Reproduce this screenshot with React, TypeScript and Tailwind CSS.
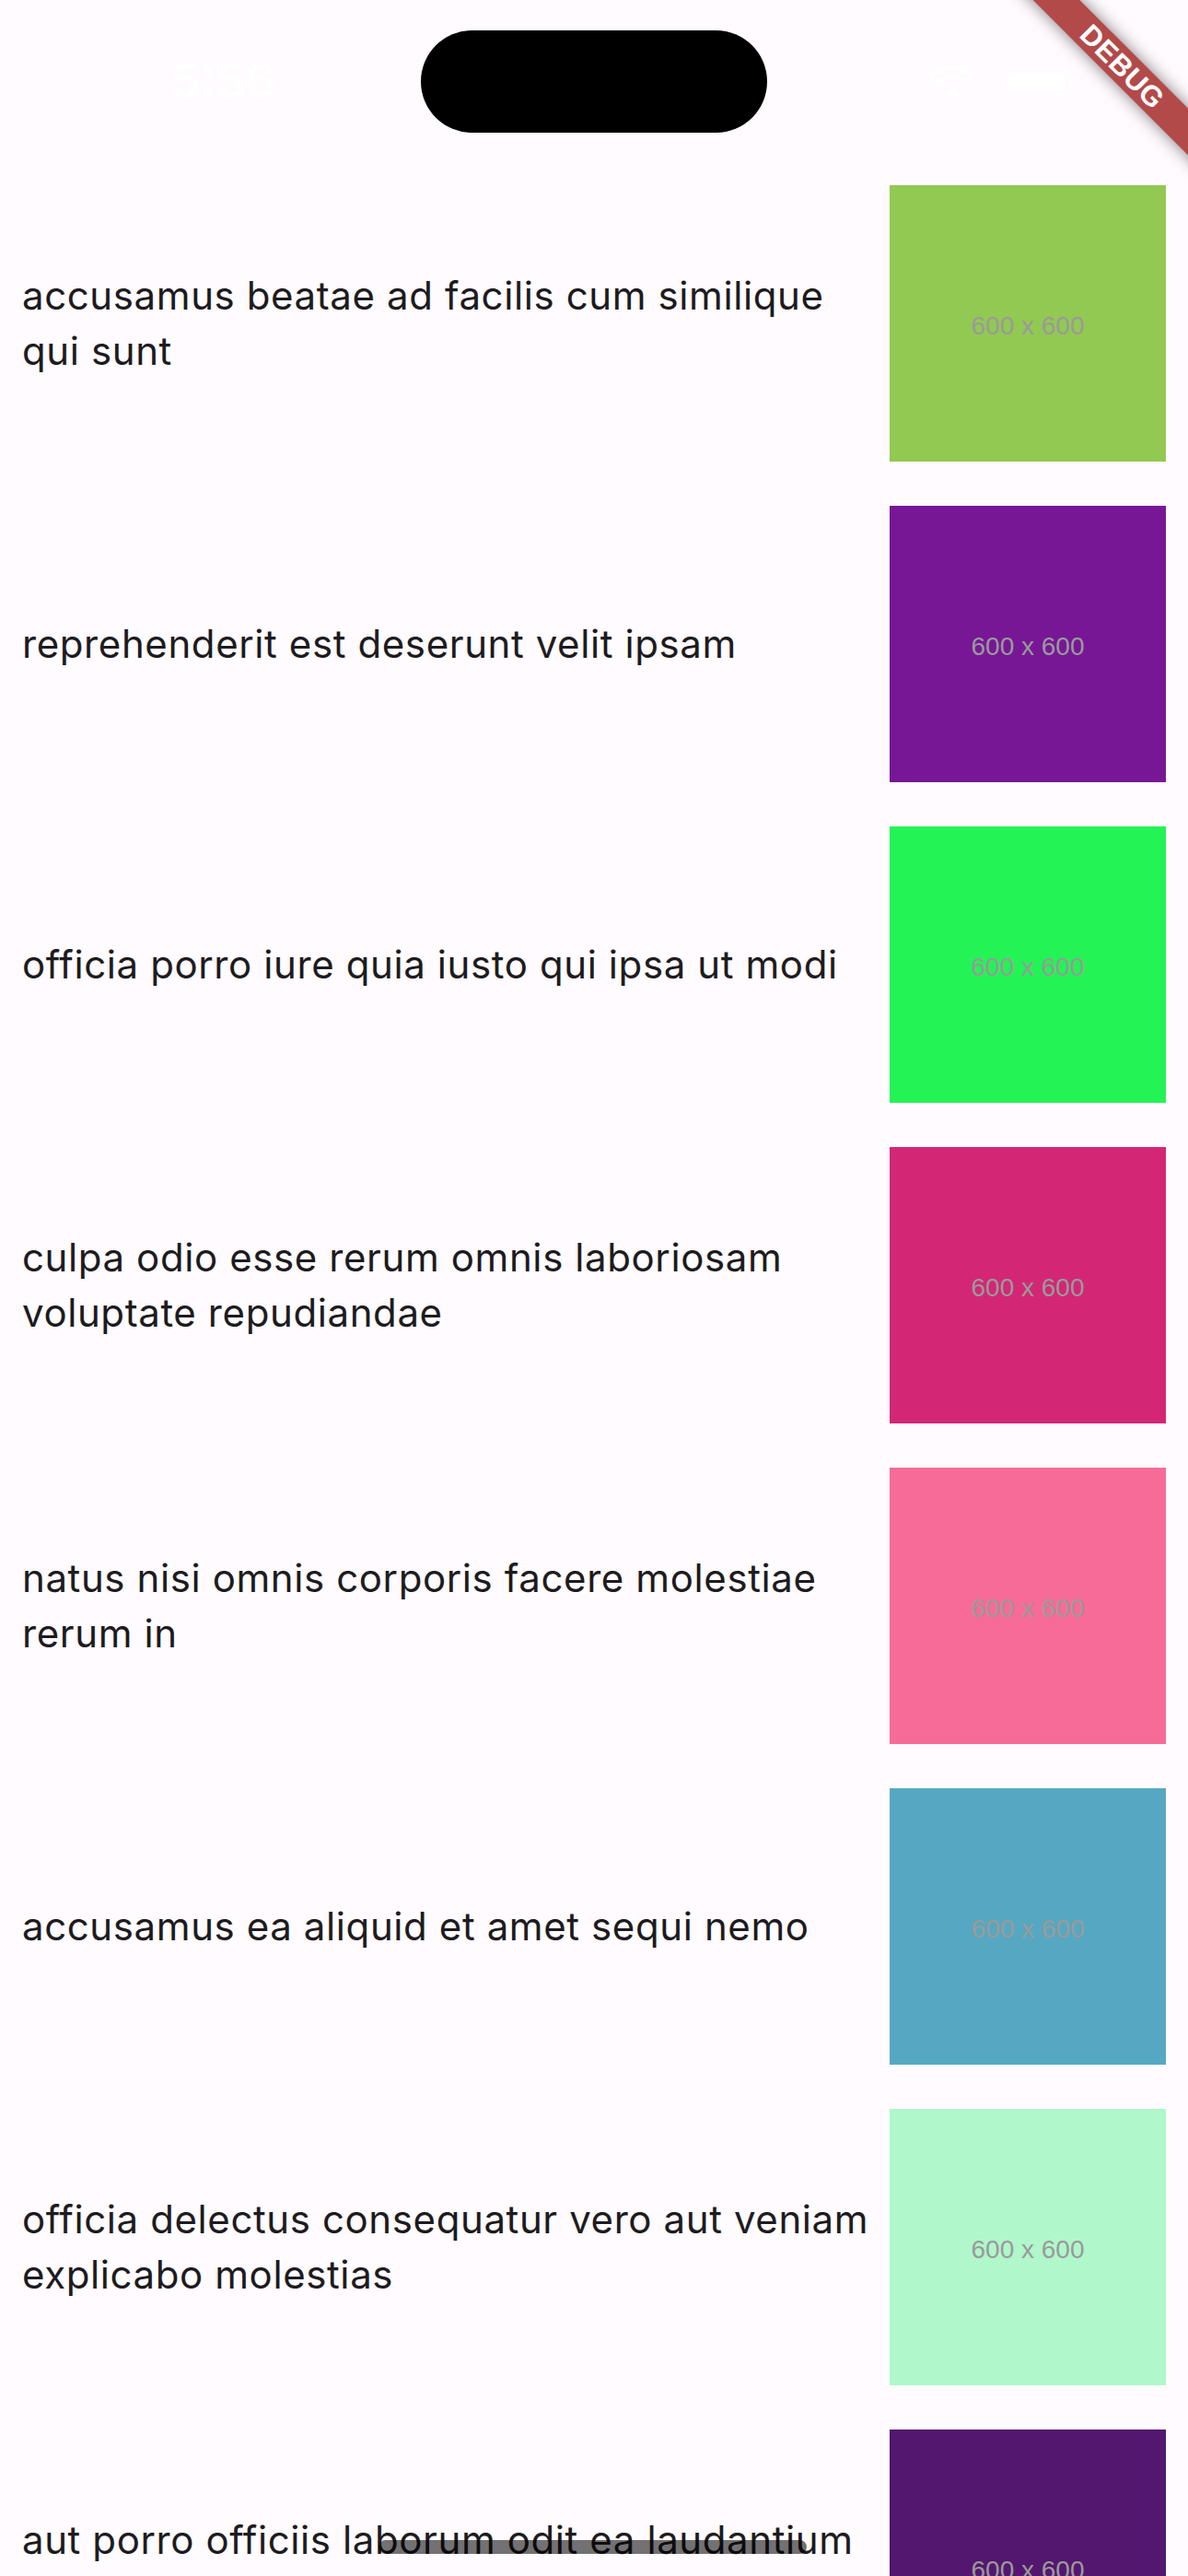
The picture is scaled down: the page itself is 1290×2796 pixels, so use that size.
const photos = [
  { title: 'accusamus beatae ad facilis cum similique qui sunt', color: 'bg-[#92c952]' },
  { title: 'reprehenderit est deserunt velit ipsam', color: 'bg-[#771796]' },
  { title: 'officia porro iure quia iusto qui ipsa ut modi', color: 'bg-[#24f355]' },
  { title: 'culpa odio esse rerum omnis laboriosam voluptate repudiandae', color: 'bg-[#d32776]' },
  { title: 'natus nisi omnis corporis facere molestiae rerum in', color: 'bg-[#f66b97]' },
  { title: 'accusamus ea aliquid et amet sequi nemo', color: 'bg-[#56a8c2]' },
  { title: 'officia delectus consequatur vero aut veniam explicabo molestias', color: 'bg-[#b0f7cc]' },
  { title: 'aut porro officiis laborum odit ea laudantium corporis', color: 'bg-[#54176f]' },
];

function StatusBar() {
  return (
    <div className="flex h-[177px] items-start pt-[33px]">
      <div className="flex h-[111px] w-[457px] items-center justify-center pl-[28px]">
        <span className="font-['Inter',sans-serif] text-[52px] font-semibold text-white">5:56</span>
      </div>
      <div className="h-[111px] w-[376px] rounded-full bg-black" />
      <div className="flex h-[111px] flex-1 items-center gap-[26px] pl-[172px]">
        <svg width="56" height="40" viewBox="0 0 58 42" fill="white">
          <path d="M29 8c9 0 17 3.6 23 9.4l4-4.2C49 6.4 39.5 2 29 2S9 6.4 2 13.2l4 4.2C12 11.6 20 8 29 8z" />
          <path d="M29 19c6 0 11.4 2.4 15.4 6.2l4-4.2C43.3 16 36.5 13 29 13s-14.3 3-19.4 8l4 4.2C17.6 21.4 23 19 29 19z" />
          <path d="M29 30c3 0 5.7 1.2 7.7 3.1L29 41l-7.7-7.9C23.3 31.2 26 30 29 30z" />
        </svg>
        <div className="flex items-center gap-[3px]">
          <div className="h-[32px] w-[76px] rounded-[10px] border-[3px] border-white/60 p-[3px]">
            <div className="h-full w-full rounded-[6px] bg-white" />
          </div>
          <div className="h-[11px] w-[4px] rounded-r-full bg-white/60" />
        </div>
      </div>
    </div>
  );
}

function PhotoRow({ title, color }: { title: string; color: string }) {
  return (
    <div className="flex h-[348px] shrink-0 items-center px-[24px]">
      <p className="flex-1 pr-[12px] font-['Inter',sans-serif] text-[42px] leading-[60px] tracking-[0.6px] text-[#1d1b20]">
        {title}
      </p>
      <div className={`flex h-[300px] w-[300px] shrink-0 items-center justify-center pt-[5px] ${color}`}>
        <span className="font-['Liberation_Sans',Arial,sans-serif] text-[28px] text-[#9a9a9a]">600 x 600</span>
      </div>
    </div>
  );
}

export default function App() {
  return (
    <div className="relative h-[2796px] w-[1290px] overflow-hidden bg-[#fffbfe]">
      <StatusBar />
      <div className="flex flex-col">
        {photos.map((p) => (
          <PhotoRow key={p.title} title={p.title} color={p.color} />
        ))}
      </div>

      {/* home indicator */}
      <div className="absolute left-[411px] top-[2757px] h-[15px] w-[465px] rounded-full bg-black/55" />

      {/* debug banner */}
      <div className="absolute left-[1069px] top-[54px] flex h-[36px] w-[300px] rotate-45 items-center justify-center bg-[#a52a2a]/[0.85] shadow-[0_0_18px_rgba(0,0,0,0.5)]">
        <span className="font-['Liberation_Sans',Arial,sans-serif] text-[31px] font-black leading-none tracking-[0.5px] text-white">DEBUG</span>
      </div>
    </div>
  );
}
